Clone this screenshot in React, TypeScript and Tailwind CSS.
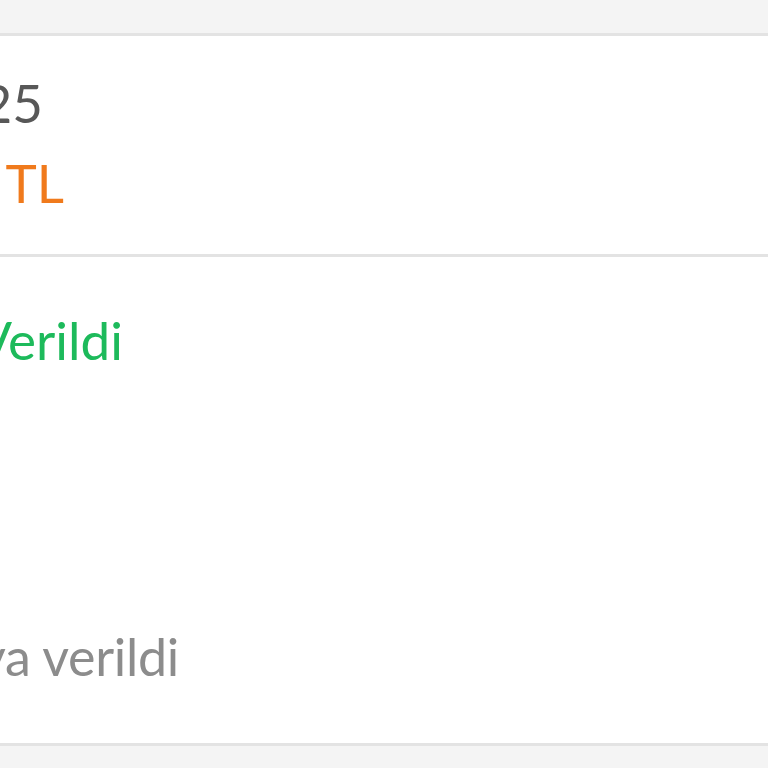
export default function App() {
  return (
    <div
      className="h-[768px] w-[768px] overflow-hidden bg-[#f4f4f4]"
      style={{ fontFamily: "Lato, 'Open Sans', sans-serif" }}
    >
      <div className="h-[33px]" />

      {/* order summary */}
      <div className="h-[224px] border-y-[3px] border-[#e3e3e3] bg-white pt-[27px] text-[53px] leading-[80px]">
        <div className="flex w-[43px] justify-end whitespace-nowrap text-[#585858]">
          <span>12.03.2025</span>
        </div>
        <div className="flex w-[64px] justify-end whitespace-nowrap text-[#f07a1c]">
          <span>1.250,00 TL</span>
        </div>
      </div>

      {/* status */}
      <div className="h-[489px] border-b-[3px] border-[#e3e3e3] bg-white pt-[43px] text-[53px] leading-[80px]">
        <div className="flex w-[123px] justify-end whitespace-nowrap text-[#1dba5b]">
          <span>Onay Verildi</span>
        </div>
        <div className="mt-[236px] flex w-[179px] justify-end whitespace-nowrap text-[52px] tracking-[-0.3px] text-[#8c8c8c]">
          <span>Kargoya verildi</span>
        </div>
      </div>
    </div>
  )
}
